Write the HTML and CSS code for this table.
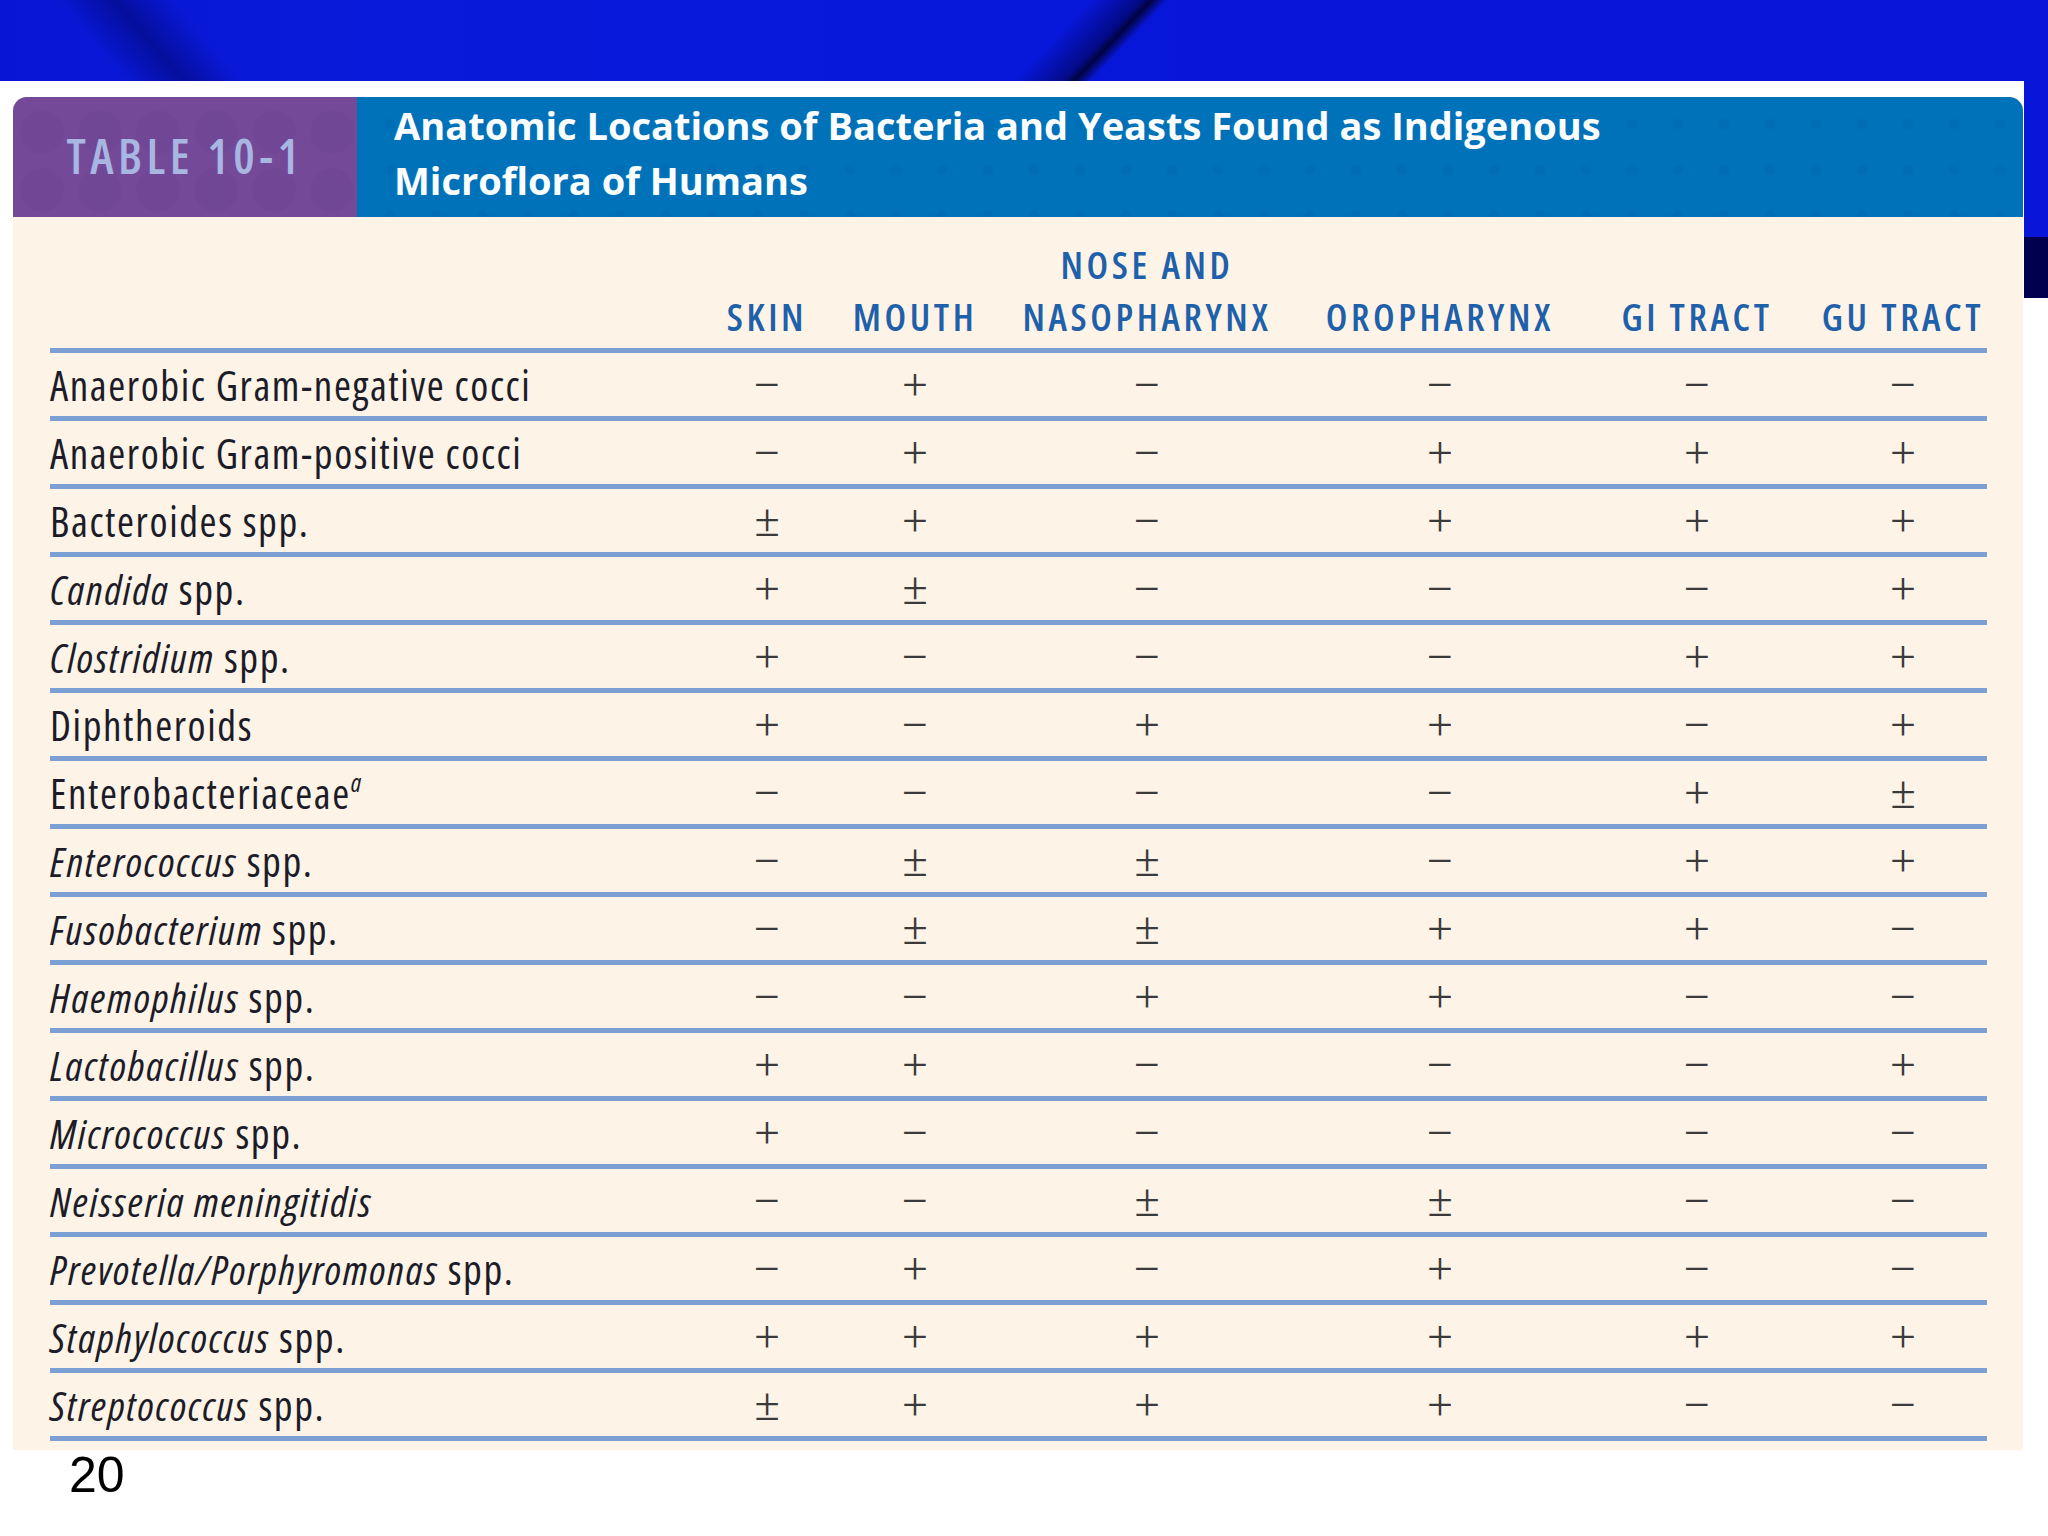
FILE: index.html
```html
<!DOCTYPE html>
<html>
<head>
<meta charset="utf-8">
<title>Table 10-1</title>
<link rel="stylesheet" href="styles.css">
</head>
<body>
<div class="slide">
  <div class="band"></div>
  <div class="figure">
    <div class="card">
      <div class="card-head">
        <div class="tag">TABLE 10-1</div>
        <div class="title">Anatomic Locations of Bacteria and Yeasts Found as Indigenous<br>Microflora of Humans</div>
      </div>
      <div class="table">
        <div class="row head">
          <div class="name"></div>
          <div class="col">SKIN</div>
          <div class="col">MOUTH</div>
          <div class="col">NOSE AND<br>NASOPHARYNX</div>
          <div class="col">OROPHARYNX</div>
          <div class="col">GI TRACT</div>
          <div class="col">GU TRACT</div>
        </div>
        <div class="row"><div class="name">Anaerobic Gram-negative cocci</div><div class="v">−</div><div class="v">+</div><div class="v">−</div><div class="v">−</div><div class="v">−</div><div class="v">−</div></div>
        <div class="row"><div class="name">Anaerobic Gram-positive cocci</div><div class="v">−</div><div class="v">+</div><div class="v">−</div><div class="v">+</div><div class="v">+</div><div class="v">+</div></div>
        <div class="row"><div class="name">Bacteroides spp.</div><div class="v">±</div><div class="v">+</div><div class="v">−</div><div class="v">+</div><div class="v">+</div><div class="v">+</div></div>
        <div class="row"><div class="name"><i>Candida</i> spp.</div><div class="v">+</div><div class="v">±</div><div class="v">−</div><div class="v">−</div><div class="v">−</div><div class="v">+</div></div>
        <div class="row"><div class="name"><i>Clostridium</i> spp.</div><div class="v">+</div><div class="v">−</div><div class="v">−</div><div class="v">−</div><div class="v">+</div><div class="v">+</div></div>
        <div class="row"><div class="name">Diphtheroids</div><div class="v">+</div><div class="v">−</div><div class="v">+</div><div class="v">+</div><div class="v">−</div><div class="v">+</div></div>
        <div class="row"><div class="name">Enterobacteriaceae<sup>a</sup></div><div class="v">−</div><div class="v">−</div><div class="v">−</div><div class="v">−</div><div class="v">+</div><div class="v">±</div></div>
        <div class="row"><div class="name"><i>Enterococcus</i> spp.</div><div class="v">−</div><div class="v">±</div><div class="v">±</div><div class="v">−</div><div class="v">+</div><div class="v">+</div></div>
        <div class="row"><div class="name"><i>Fusobacterium</i> spp.</div><div class="v">−</div><div class="v">±</div><div class="v">±</div><div class="v">+</div><div class="v">+</div><div class="v">−</div></div>
        <div class="row"><div class="name"><i>Haemophilus</i> spp.</div><div class="v">−</div><div class="v">−</div><div class="v">+</div><div class="v">+</div><div class="v">−</div><div class="v">−</div></div>
        <div class="row"><div class="name"><i>Lactobacillus</i> spp.</div><div class="v">+</div><div class="v">+</div><div class="v">−</div><div class="v">−</div><div class="v">−</div><div class="v">+</div></div>
        <div class="row"><div class="name"><i>Micrococcus</i> spp.</div><div class="v">+</div><div class="v">−</div><div class="v">−</div><div class="v">−</div><div class="v">−</div><div class="v">−</div></div>
        <div class="row"><div class="name"><i>Neisseria meningitidis</i></div><div class="v">−</div><div class="v">−</div><div class="v">±</div><div class="v">±</div><div class="v">−</div><div class="v">−</div></div>
        <div class="row"><div class="name"><i>Prevotella/Porphyromonas</i> spp.</div><div class="v">−</div><div class="v">+</div><div class="v">−</div><div class="v">+</div><div class="v">−</div><div class="v">−</div></div>
        <div class="row"><div class="name"><i>Staphylococcus</i> spp.</div><div class="v">+</div><div class="v">+</div><div class="v">+</div><div class="v">+</div><div class="v">+</div><div class="v">+</div></div>
        <div class="row"><div class="name"><i>Streptococcus</i> spp.</div><div class="v">±</div><div class="v">+</div><div class="v">+</div><div class="v">+</div><div class="v">−</div><div class="v">−</div></div>
      </div>
    </div>
  </div>
  <div class="page-num">20</div>
</div>
</body>
</html>
```
FILE: styles.css
```css
* { box-sizing: border-box; }
html, body { margin: 0; padding: 0; }
body { background: #ffffff; font-family: "Open Sans", "Liberation Sans", sans-serif; }

.slide {
  width: 2048px;
  height: 1536px;
  overflow: hidden;
  background:
    linear-gradient(#00004f, #00004f) right 0 top 237px / 24px 61px no-repeat,
    linear-gradient(#0716d8, #0716d8) right 0 top 0 / 24px 237px no-repeat,
    #ffffff;
}

.band {
  height: 81px;
  width: 2048px;
  background:
    linear-gradient(133.6deg, transparent 0 790px, rgba(0, 0, 70, 0.55) 826px, rgba(0, 0, 40, 0.85) 834px, transparent 846px, transparent 100%),
    linear-gradient(49.6deg, transparent 0 95px, rgba(0, 0, 70, 0.4) 140px, transparent 185px, transparent 100%),
    linear-gradient(90deg, #0716d4 0, #0a1ad9 300px, #0819dc 800px, #0716d8 1200px, #0716d8 100%);
}

.figure {
  width: 2024px;
  background: #ffffff;
  padding: 16px 0 0 13px;
}

.card {
  width: 2010px;
  background: #fdf3e7;
  border-radius: 14px 14px 0 0;
}

.card-head {
  display: flex;
  height: 120px;
}

.tag {
  width: 344px;
  flex: none;
  display: flex;
  align-items: center;
  justify-content: center;
  padding-bottom: 4px;
  border-top-left-radius: 14px;
  background:
    radial-gradient(circle, rgba(95, 55, 135, 0.16) 0 21px, transparent 23px) 0 6px / 58px 58px,
    #744a98;
  color: #a8b6e2;
  font-family: "Open Sans", "DejaVu Sans", sans-serif;
  font-stretch: 75%;
  font-weight: 600;
  font-size: 48px;
  letter-spacing: 4.5px;
}

.title {
  flex: 1;
  padding: 1px 0 0 37px;
  border-top-right-radius: 14px;
  background:
    radial-gradient(circle, rgba(0, 70, 140, 0.1) 0 5px, transparent 6px) 10px 4px / 46px 46px,
    #0072ba;
  color: #fbfdff;
  font-family: "Open Sans", "DejaVu Sans", sans-serif;
  font-stretch: 100%;
  font-weight: 700;
  font-size: 38px;
  line-height: 55px;
}

.table {
  padding: 0 36px 9px 37px;
}

.row {
  display: grid;
  grid-template-columns: 643px 148px 148px 316px 270px 244px 168px;
  align-items: center;
  height: 68px;
  border-bottom: 5px solid #7c9fd4;
}

.row.head {
  height: 136px;
  align-items: end;
  padding-bottom: 6px;
}

.col {
  text-align: center;
  color: #1e60aa;
  font-family: "Open Sans", "DejaVu Sans", sans-serif;
  font-stretch: 75%;
  font-weight: 600;
  font-size: 38px;
  line-height: 52px;
  letter-spacing: 3.6px;
  white-space: nowrap;
}

.name {
  color: #1c1c28;
  font-family: "Open Sans", "DejaVu Sans", sans-serif;
  font-stretch: 75%;
  font-size: 41px;
  letter-spacing: 1.6px;
  white-space: nowrap;
}

.name i { font-style: italic; }

.name sup {
  font-style: italic;
  font-size: 25px;
  line-height: 0;
  vertical-align: 17px;
}

.v {
  text-align: center;
  color: #3a3a3a;
  font-family: "Liberation Serif", "DejaVu Serif", serif;
  font-size: 46px;
  line-height: 60px;
}

.page-num {
  margin-left: 69px;
  font-family: "Liberation Sans", Arial, sans-serif;
  font-size: 50px;
  line-height: 50px;
  color: #000000;
}
```
